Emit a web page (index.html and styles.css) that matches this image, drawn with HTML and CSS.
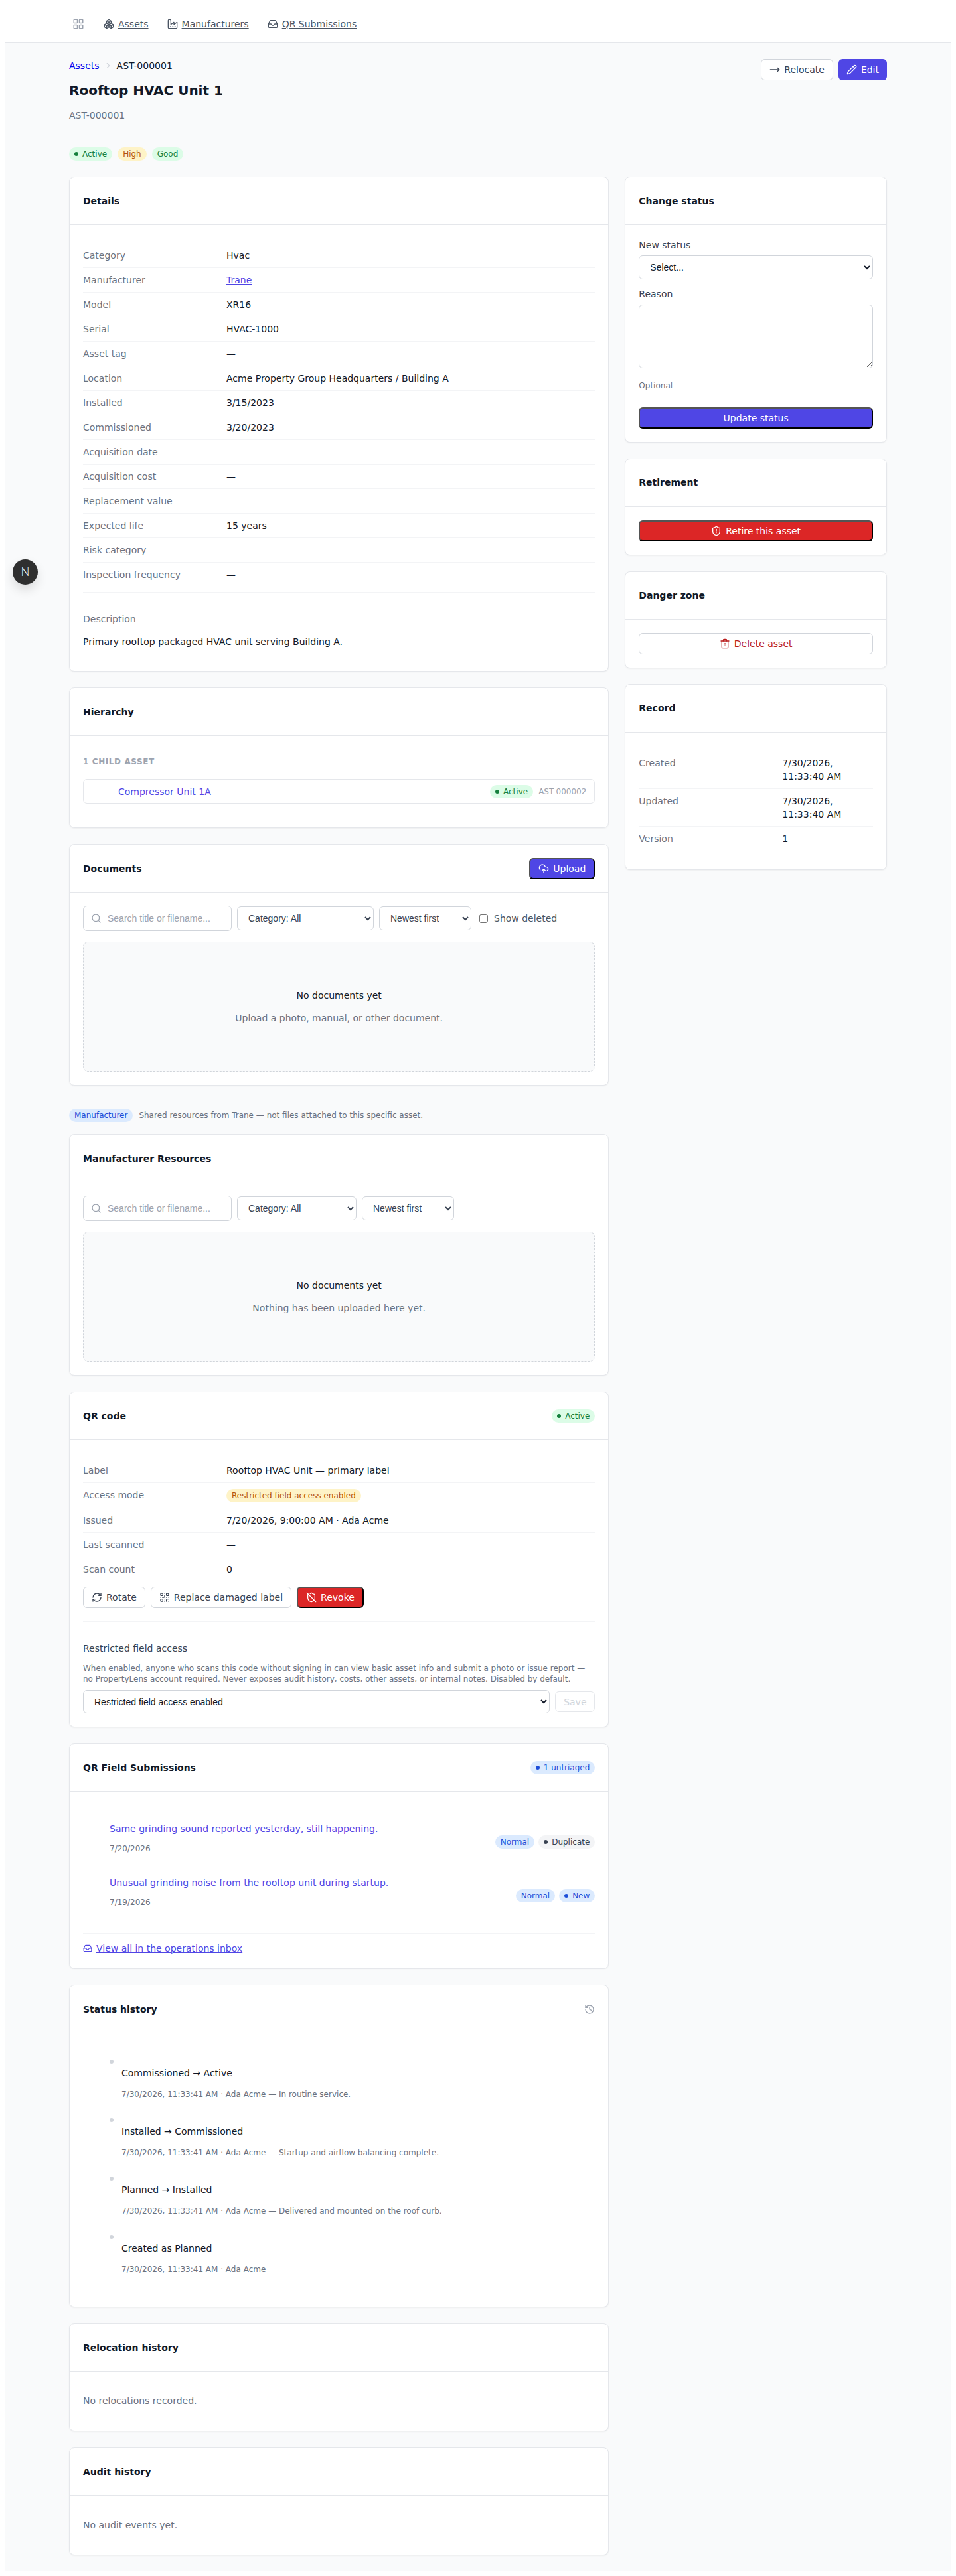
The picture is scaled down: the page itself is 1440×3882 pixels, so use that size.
FILE: index.html
```html
<!DOCTYPE html>
<html lang="en">
<head>
<meta charset="utf-8">
<title>Rooftop HVAC Unit 1</title>
<link rel="stylesheet" href="styles.css">
</head>
<body>
<svg class="sprite" aria-hidden="true">
  <symbol id="i-grid" viewBox="0 0 24 24"><rect width="7" height="7" x="3" y="3" rx="1"/><rect width="7" height="7" x="14" y="3" rx="1"/><rect width="7" height="7" x="14" y="14" rx="1"/><rect width="7" height="7" x="3" y="14" rx="1"/></symbol>
  <symbol id="i-boxes" viewBox="0 0 24 24"><path d="M2.97 12.92A2 2 0 0 0 2 14.63v3.24a2 2 0 0 0 .97 1.71l3 1.8a2 2 0 0 0 2.06 0L12 19v-5.5l-5-3-4.03 2.42Z"/><path d="m7 16.5-4.74-2.85"/><path d="m7 16.5 5-3"/><path d="M7 16.5v5.17"/><path d="M12 13.5V19l3.97 2.38a2 2 0 0 0 2.06 0l3-1.8a2 2 0 0 0 .97-1.71v-3.24a2 2 0 0 0-.97-1.71L17 10.5l-5 3Z"/><path d="m17 16.5-5-3"/><path d="m17 16.5 4.74-2.85"/><path d="M17 16.5v5.17"/><path d="M7.97 4.42A2 2 0 0 0 7 6.13v4.37l5 3 5-3V6.13a2 2 0 0 0-.97-1.71l-3-1.8a2 2 0 0 0-2.06 0l-3 1.8Z"/><path d="M12 8 7.26 5.15"/><path d="m12 8 4.74-2.85"/><path d="M12 13.5V8"/></symbol>
  <symbol id="i-factory" viewBox="0 0 24 24"><path d="M2 20a2 2 0 0 0 2 2h16a2 2 0 0 0 2-2V8l-7 5V8l-7 5V4a2 2 0 0 0-2-2H4a2 2 0 0 0-2 2Z"/><path d="M17 18h1"/><path d="M12 18h1"/><path d="M7 18h1"/></symbol>
  <symbol id="i-inbox" viewBox="0 0 24 24"><polyline points="22 12 16 12 14 15 10 15 8 12 2 12"/><path d="M5.45 5.11 2 12v6a2 2 0 0 0 2 2h16a2 2 0 0 0 2-2v-6l-3.45-6.89A2 2 0 0 0 16.76 4H7.24a2 2 0 0 0-1.79 1.11z"/></symbol>
  <symbol id="i-chevron" viewBox="0 0 24 24"><path d="m9 18 6-6-6-6"/></symbol>
  <symbol id="i-arrow" viewBox="0 0 24 24"><path d="M18 8l4 4-4 4"/><path d="M2 12h20"/></symbol>
  <symbol id="i-pencil" viewBox="0 0 24 24"><path d="M21.174 6.812a1 1 0 0 0-3.986-3.987L3.842 16.174a2 2 0 0 0-.5.83l-1.321 4.352a.5.5 0 0 0 .623.622l4.353-1.32a2 2 0 0 0 .83-.497z"/><path d="m15 5 4 4"/></symbol>
  <symbol id="i-shield-alert" viewBox="0 0 24 24"><path d="M20 13c0 5-3.5 7.5-7.66 8.95a1 1 0 0 1-.67-.01C7.5 20.5 4 18 4 13V6a1 1 0 0 1 1-1c2 0 4.5-1.2 6.24-2.72a1.17 1.17 0 0 1 1.52 0C14.51 3.81 17 5 19 5a1 1 0 0 1 1 1z"/><path d="M12 8v4"/><path d="M12 16h.01"/></symbol>
  <symbol id="i-trash" viewBox="0 0 24 24"><path d="M3 6h18"/><path d="M19 6v14c0 1-1 2-2 2H7c-1 0-2-1-2-2V6"/><path d="M8 6V4c0-1 1-2 2-2h4c1 0 2 1 2 2v2"/><line x1="10" x2="10" y1="11" y2="17"/><line x1="14" x2="14" y1="11" y2="17"/></symbol>
  <symbol id="i-upload" viewBox="0 0 24 24"><path d="M12 13v8"/><path d="M4 14.899A7 7 0 1 1 15.71 8h1.79a4.5 4.5 0 0 1 2.5 8.242"/><path d="m8 17 4-4 4 4"/></symbol>
  <symbol id="i-search" viewBox="0 0 24 24"><circle cx="11" cy="11" r="8"/><path d="m21 21-4.3-4.3"/></symbol>
  <symbol id="i-refresh" viewBox="0 0 24 24"><path d="M3 12a9 9 0 0 1 9-9 9.75 9.75 0 0 1 6.74 2.74L21 8"/><path d="M21 3v5h-5"/><path d="M21 12a9 9 0 0 1-9 9 9.75 9.75 0 0 1-6.74-2.74L3 16"/><path d="M8 16H3v5"/></symbol>
  <symbol id="i-qr" viewBox="0 0 24 24"><rect width="5" height="5" x="3" y="3" rx="1"/><rect width="5" height="5" x="16" y="3" rx="1"/><rect width="5" height="5" x="3" y="16" rx="1"/><path d="M21 16h-3a2 2 0 0 0-2 2v3"/><path d="M21 21v.01"/><path d="M12 7v3a2 2 0 0 1-2 2H7"/><path d="M3 12h.01"/><path d="M12 3h.01"/><path d="M12 16v.01"/><path d="M16 12h1"/><path d="M21 12v.01"/><path d="M12 21v-1"/></symbol>
  <symbol id="i-shield-off" viewBox="0 0 24 24"><path d="m2 2 20 20"/><path d="M5 5a1 1 0 0 0-1 1v7c0 5 3.5 7.5 7.67 8.94a1 1 0 0 0 .67.01c2.35-.82 4.48-1.97 5.9-3.71"/><path d="M9.309 3.652A12.252 12.252 0 0 0 11.24 2.28a1.17 1.17 0 0 1 1.52 0C14.51 3.81 17 5 19 5a1 1 0 0 1 1 1v7a9.784 9.784 0 0 1-.08 1.264"/></symbol>
  <symbol id="i-history" viewBox="0 0 24 24"><path d="M3 12a9 9 0 1 0 9-9 9.75 9.75 0 0 0-6.74 2.74L3 8"/><path d="M3 3v5h5"/><path d="M12 7v5l4 2"/></symbol>
</svg>

<div class="app">
  <header class="topbar">
    <nav class="topbar-inner">
      <svg class="icon nav-toggle"><use href="#i-grid"/></svg>
      <a class="nav-link" href="#"><svg class="icon"><use href="#i-boxes"/></svg>Assets</a>
      <a class="nav-link" href="#"><svg class="icon"><use href="#i-factory"/></svg>Manufacturers</a>
      <a class="nav-link" href="#"><svg class="icon"><use href="#i-inbox"/></svg>QR Submissions</a>
    </nav>
  </header>

  <main class="page">
    <div class="page-head">
      <div>
        <div class="crumbs"><a class="crumb-link" href="#">Assets</a><svg class="icon crumb-sep"><use href="#i-chevron"/></svg><span>AST-000001</span></div>
        <h1 class="title">Rooftop HVAC Unit 1</h1>
        <div class="subtitle">AST-000001</div>
      </div>
      <div class="head-actions">
        <a class="btn btn-outline btn-link" href="#"><svg class="icon"><use href="#i-arrow"/></svg>Relocate</a>
        <a class="btn btn-indigo btn-link" href="#"><svg class="icon"><use href="#i-pencil"/></svg>Edit</a>
      </div>
    </div>

    <div class="badge-row">
      <span class="badge green"><i class="dot"></i>Active</span>
      <span class="badge amber">High</span>
      <span class="badge green">Good</span>
    </div>

    <div class="layout">
      <div class="col col-main">
        <section class="card">
          <div class="card-head"><h2 class="card-title">Details</h2></div>
          <div class="card-body">
            <dl class="rows">
              <div class="row"><dt>Category</dt><dd>Hvac</dd></div>
              <div class="row"><dt>Manufacturer</dt><dd><a class="link" href="#">Trane</a></dd></div>
              <div class="row"><dt>Model</dt><dd>XR16</dd></div>
              <div class="row"><dt>Serial</dt><dd>HVAC-1000</dd></div>
              <div class="row"><dt>Asset tag</dt><dd>—</dd></div>
              <div class="row"><dt>Location</dt><dd>Acme Property Group Headquarters / Building A</dd></div>
              <div class="row"><dt>Installed</dt><dd>3/15/2023</dd></div>
              <div class="row"><dt>Commissioned</dt><dd>3/20/2023</dd></div>
              <div class="row"><dt>Acquisition date</dt><dd>—</dd></div>
              <div class="row"><dt>Acquisition cost</dt><dd>—</dd></div>
              <div class="row"><dt>Replacement value</dt><dd>—</dd></div>
              <div class="row"><dt>Expected life</dt><dd>15 years</dd></div>
              <div class="row"><dt>Risk category</dt><dd>—</dd></div>
              <div class="row"><dt>Inspection frequency</dt><dd>—</dd></div>
            </dl>
            <div class="description">
              <p class="description-label">Description</p>
              <p class="description-text">Primary rooftop packaged HVAC unit serving Building A.</p>
            </div>
          </div>
        </section>

        <section class="card">
          <div class="card-head"><h2 class="card-title">Hierarchy</h2></div>
          <div class="card-body">
            <div class="eyebrow">1 child asset</div>
            <div class="child">
              <a class="link child-link" href="#">Compressor Unit 1A</a>
              <span class="badge green"><i class="dot"></i>Active</span>
              <span class="child-code">AST-000002</span>
            </div>
          </div>
        </section>

        <section class="card">
          <div class="card-head">
            <h2 class="card-title">Documents</h2>
            <button class="btn btn-solid indigo" type="button"><svg class="icon"><use href="#i-upload"/></svg>Upload</button>
          </div>
          <div class="card-body">
            <div class="toolbar">
              <div class="search"><svg class="icon search-icon"><use href="#i-search"/></svg><input class="search-input" type="text" placeholder="Search title or filename..."></div>
              <select class="select select-cat-wide"><option>Category: All</option></select>
              <select class="select select-sort"><option>Newest first</option></select>
              <label class="check"><input type="checkbox">Show deleted</label>
            </div>
            <div class="empty">
              <div class="empty-title">No documents yet</div>
              <div class="empty-sub">Upload a photo, manual, or other document.</div>
            </div>
          </div>
        </section>

        <div class="mfr-group">
          <div class="mfr-note"><span class="badge blue">Manufacturer</span><span>Shared resources from Trane — not files attached to this specific asset.</span></div>
          <section class="card">
            <div class="card-head"><h2 class="card-title">Manufacturer Resources</h2></div>
            <div class="card-body">
              <div class="toolbar">
                <div class="search"><svg class="icon search-icon"><use href="#i-search"/></svg><input class="search-input" type="text" placeholder="Search title or filename..."></div>
                <select class="select select-cat"><option>Category: All</option></select>
                <select class="select select-sort"><option>Newest first</option></select>
              </div>
              <div class="empty">
                <div class="empty-title">No documents yet</div>
                <div class="empty-sub">Nothing has been uploaded here yet.</div>
              </div>
            </div>
          </section>
        </div>

        <section class="card">
          <div class="card-head">
            <h2 class="card-title">QR code</h2>
            <span class="badge green"><i class="dot"></i>Active</span>
          </div>
          <div class="card-body">
            <dl class="rows">
              <div class="row"><dt>Label</dt><dd>Rooftop HVAC Unit — primary label</dd></div>
              <div class="row row-badge"><dt>Access mode</dt><dd><span class="badge amber">Restricted field access enabled</span></dd></div>
              <div class="row"><dt>Issued</dt><dd>7/20/2026, 9:00:00 AM · Ada Acme</dd></div>
              <div class="row"><dt>Last scanned</dt><dd>—</dd></div>
              <div class="row"><dt>Scan count</dt><dd>0</dd></div>
            </dl>
            <div class="qr-actions">
              <button class="btn btn-outline" type="button"><svg class="icon"><use href="#i-refresh"/></svg>Rotate</button>
              <button class="btn btn-outline" type="button"><svg class="icon"><use href="#i-qr"/></svg>Replace damaged label</button>
              <button class="btn btn-solid red" type="button"><svg class="icon"><use href="#i-shield-off"/></svg>Revoke</button>
            </div>
            <div class="access">
              <div class="access-title">Restricted field access</div>
              <p class="access-help">When enabled, anyone who scans this code without signing in can view basic asset info and submit a photo or issue report — no PropertyLens account required. Never exposes audit history, costs, other assets, or internal notes. Disabled by default.</p>
              <div class="access-form">
                <select class="select select-access"><option>Restricted field access enabled</option></select>
                <button class="btn btn-save" type="button" disabled>Save</button>
              </div>
            </div>
          </div>
        </section>

        <section class="card">
          <div class="card-head">
            <h2 class="card-title">QR Field Submissions</h2>
            <span class="badge blue"><i class="dot"></i>1 untriaged</span>
          </div>
          <div class="card-body">
            <ul class="subs">
              <li class="sub">
                <div class="sub-main"><a class="link" href="#">Same grinding sound reported yesterday, still happening.</a><div class="sub-date">7/20/2026</div></div>
                <div class="sub-badges"><span class="badge blue">Normal</span><span class="badge gray"><i class="dot"></i>Duplicate</span></div>
              </li>
              <li class="sub">
                <div class="sub-main"><a class="link" href="#">Unusual grinding noise from the rooftop unit during startup.</a><div class="sub-date">7/19/2026</div></div>
                <div class="sub-badges"><span class="badge blue">Normal</span><span class="badge blue"><i class="dot"></i>New</span></div>
              </li>
            </ul>
            <div class="inbox-foot"><svg class="icon link-icon"><use href="#i-inbox"/></svg><a class="link" href="#">View all in the operations inbox</a></div>
          </div>
        </section>

        <section class="card">
          <div class="card-head">
            <h2 class="card-title">Status history</h2>
            <svg class="icon head-icon"><use href="#i-history"/></svg>
          </div>
          <div class="card-body">
            <ol class="timeline">
              <li class="event"><i class="event-dot"></i><p class="event-title">Commissioned → Active</p><p class="event-meta">7/30/2026, 11:33:41 AM · Ada Acme — In routine service.</p></li>
              <li class="event"><i class="event-dot"></i><p class="event-title">Installed → Commissioned</p><p class="event-meta">7/30/2026, 11:33:41 AM · Ada Acme — Startup and airflow balancing complete.</p></li>
              <li class="event"><i class="event-dot"></i><p class="event-title">Planned → Installed</p><p class="event-meta">7/30/2026, 11:33:41 AM · Ada Acme — Delivered and mounted on the roof curb.</p></li>
              <li class="event"><i class="event-dot"></i><p class="event-title">Created as Planned</p><p class="event-meta">7/30/2026, 11:33:41 AM · Ada Acme</p></li>
            </ol>
          </div>
        </section>

        <section class="card">
          <div class="card-head"><h2 class="card-title">Relocation history</h2></div>
          <div class="card-body"><p class="muted-line">No relocations recorded.</p></div>
        </section>

        <section class="card">
          <div class="card-head"><h2 class="card-title">Audit history</h2></div>
          <div class="card-body"><p class="muted-line">No audit events yet.</p></div>
        </section>
      </div>

      <aside class="col">
        <section class="card">
          <div class="card-head"><h2 class="card-title">Change status</h2></div>
          <div class="card-body">
            <label class="field-label">New status</label>
            <select class="select select-full"><option>Select...</option></select>
            <label class="field-label field-label-next">Reason</label>
            <textarea class="textarea"></textarea>
            <p class="hint">Optional</p>
            <button class="btn btn-solid indigo btn-full" type="button">Update status</button>
          </div>
        </section>

        <section class="card">
          <div class="card-head"><h2 class="card-title">Retirement</h2></div>
          <div class="card-body">
            <button class="btn btn-solid red btn-full" type="button"><svg class="icon"><use href="#i-shield-alert"/></svg>Retire this asset</button>
          </div>
        </section>

        <section class="card">
          <div class="card-head"><h2 class="card-title">Danger zone</h2></div>
          <div class="card-body">
            <button class="btn btn-outline btn-danger btn-full" type="button"><svg class="icon"><use href="#i-trash"/></svg>Delete asset</button>
          </div>
        </section>

        <section class="card">
          <div class="card-head"><h2 class="card-title">Record</h2></div>
          <div class="card-body">
            <dl class="rows">
              <div class="row"><dt>Created</dt><dd>7/30/2026, 11:33:40 AM</dd></div>
              <div class="row"><dt>Updated</dt><dd>7/30/2026, 11:33:40 AM</dd></div>
              <div class="row"><dt>Version</dt><dd>1</dd></div>
            </dl>
          </div>
        </section>
      </aside>
    </div>
  </main>
</div>

<div class="dev-indicator">N</div>
</body>
</html>
```
FILE: styles.css
```css
* { box-sizing: border-box; }

body {
  background: #fff;
  color: #111827;
  font-family: "DejaVu Sans", sans-serif;
  font-size: 14px;
  line-height: 20px;
}

.sprite { display: none; }

.icon {
  width: 16px;
  height: 16px;
  flex: none;
  fill: none;
  stroke: currentColor;
  stroke-width: 2;
  stroke-linecap: round;
  stroke-linejoin: round;
}

.app { background: #f9fafb; min-height: 3866px; }

.topbar { background: #fff; border-bottom: 1px solid #e5e7eb; height: 57px; }
.topbar-inner {
  max-width: 1280px;
  margin: 0 auto;
  padding: 0 24px;
  height: 56px;
  display: flex;
  align-items: center;
}
.nav-toggle { width: 18px; height: 18px; margin: 0 17px 0 5px; color: #9ca3af; }
.nav-link {
  display: flex;
  align-items: center;
  gap: 6px;
  padding: 0 12px;
  margin-right: 4px;
  color: #4b5563;
}

.page { max-width: 1280px; margin: 0 auto; padding: 24px 24px 24px; }

.page-head { display: flex; justify-content: space-between; align-items: flex-start; }
.crumbs { display: flex; align-items: center; gap: 4px; color: #111827; }
.crumb-link { color: #0000ee; }
.crumb-sep { width: 14px; height: 14px; margin: 0 2px; color: #d1d5db; }
.title { margin: 13px 0 0; font-size: 20px; line-height: 28px; font-weight: 700; }
.subtitle { margin-top: 14px; color: #6b7280; }
.head-actions { display: flex; gap: 8px; }

.badge-row { display: flex; gap: 8px; margin-top: 38px; margin-bottom: 24px; }

.badge {
  display: inline-flex;
  align-items: center;
  gap: 6px;
  height: 20px;
  padding: 0 8px;
  border-radius: 999px;
  font-size: 12px;
  line-height: 16px;
  white-space: nowrap;
}
.dot { width: 6px; height: 6px; border-radius: 50%; background: currentColor; flex: none; }
.green { background: #dcfce7; color: #15803d; }
.amber { background: #fef3c7; color: #b45309; }
.blue { background: #dbeafe; color: #1d4ed8; }
.gray { background: #f3f4f6; color: #374151; }

.btn {
  display: inline-flex;
  align-items: center;
  justify-content: center;
  gap: 6px;
  height: 32px;
  padding: 0 12px;
  border-radius: 6px;
  font-family: "DejaVu Sans", sans-serif;
  font-size: 14px;
  line-height: 20px;
  white-space: nowrap;
}
.btn-link { text-decoration: underline; }
.btn-outline { background: #fff; border: 1px solid #d1d5db; color: #374151; }
.btn-indigo { background: #4f46e5; border: 0; color: #fff; }
.btn-solid { border: 2px outset #000; color: #fff; }
.btn-solid.indigo { background: #4f46e5; }
.btn-solid.red { background: #dc2626; }
.btn-danger { color: #b91c1c; }
.btn-full { width: 100%; }
.btn-save {
  width: 60px;
  height: 31px;
  background: #fff;
  border: 1px solid #e5e7eb;
  color: #d1d5db;
}

.layout { display: grid; grid-template-columns: repeat(3, minmax(0, 1fr)); gap: 24px; align-items: start; }
.col { display: flex; flex-direction: column; gap: 24px; min-width: 0; }
.col-main { grid-column: span 2; }

.card {
  background: #fff;
  border: 1px solid #e5e7eb;
  border-radius: 8px;
  box-shadow: 0 1px 2px rgba(0, 0, 0, 0.05);
}
.card-head {
  display: flex;
  align-items: center;
  justify-content: space-between;
  height: 72px;
  padding: 0 20px;
  border-bottom: 1px solid #e5e7eb;
}
.card-title { margin: 0; font-size: 14px; line-height: 20px; font-weight: 700; }
.card-body { padding: 20px; }
.head-icon { color: #9ca3af; }

.rows { margin: 8px 0; }
.row {
  display: grid;
  grid-template-columns: 200px minmax(0, 1fr);
  column-gap: 16px;
  padding: 8px 0;
  border-bottom: 1px solid #f3f4f6;
}
.row:last-child { border-bottom: 0; }
.row dt { color: #6b7280; }
.row dd { margin: 0; color: #111827; }
.row-badge dd .badge { display: flex; width: fit-content; margin-top: 1px; }

.link { color: #4f46e5; }

.description { margin-top: 0; padding-top: 30px; border-top: 1px solid #f3f4f6; }
.description-label { margin: 0 0 14px; color: #6b7280; }
.description-text { margin: 0 0 14px; }

.eyebrow {
  margin: 11px 0 18px;
  color: #9ca3af;
  font-size: 12px;
  line-height: 16px;
  font-weight: 700;
  letter-spacing: 0.6px;
  text-transform: uppercase;
}
.child {
  display: flex;
  align-items: center;
  gap: 8px;
  height: 37px;
  padding: 0 12px 0 52px;
  border: 1px solid #e5e7eb;
  border-radius: 6px;
  margin-bottom: 16px;
}
.child-link { margin-right: auto; }
.child-code { color: #9ca3af; font-size: 12px; }

.toolbar { display: flex; align-items: center; gap: 8px; margin-bottom: 16px; }
.search { position: relative; width: 224px; flex: none; }
.search-icon { position: absolute; left: 12px; top: 11px; color: #9ca3af; }
.search-input {
  display: block;
  width: 100%;
  height: 38px;
  padding: 0 12px 0 36px;
  background: #fff;
  border: 1px solid #d1d5db;
  border-radius: 6px;
  color: #111827;
  font-family: "Liberation Sans", Arial, sans-serif;
  font-size: 14px;
}
.search-input::placeholder { color: #9ca3af; opacity: 1; }

.select {
  height: 36px;
  padding: 0 12px;
  background: #fff;
  border: 1px solid #d1d5db;
  border-radius: 6px;
  color: #374151;
  font-family: "Liberation Sans", Arial, sans-serif;
  font-size: 14px;
}
.select-cat-wide { width: 206px; }
.select-cat { width: 180px; }
.select-sort { width: 139px; }
.select-full { display: block; width: 100%; margin-top: 6px; color: #111827; }
.select-access { flex: 1; min-width: 0; height: 35px; color: #111827; }

.check { display: flex; align-items: center; gap: 6px; margin-left: 0; color: #4b5563; }

.empty {
  display: flex;
  flex-direction: column;
  align-items: center;
  justify-content: center;
  gap: 14px;
  min-height: 196px;
  background: #f9fafb;
  border: 1px dashed #d1d5db;
  border-radius: 8px;
}
.empty-sub { color: #6b7280; }

.mfr-group { padding-top: 10.5px; }
.mfr-note { display: flex; align-items: center; gap: 9px; margin-bottom: 18.5px; color: #6b7280; font-size: 12px; }

.qr-actions { display: flex; gap: 8px; padding-bottom: 20px; border-bottom: 1px solid #f3f4f6; }
.access { padding-top: 30px; }
.access-title { color: #374151; }
.access-help { margin: 12px 0 9px; color: #6b7280; font-size: 12px; line-height: 16px; }
.access-form { display: flex; align-items: center; gap: 8px; }

.subs { margin: 16px 0; padding: 0 0 0 40px; list-style: none; }
.sub {
  display: flex;
  align-items: center;
  justify-content: space-between;
  border-bottom: 1px solid #f3f4f6;
}
.sub:last-child { border-bottom: 0; }
.sub-main { padding: 10px 0 22px; }
.sub-date { margin-top: 12px; color: #6b7280; font-size: 12px; line-height: 16px; }
.sub-badges { display: flex; gap: 6px; }
.inbox-foot { display: flex; align-items: center; gap: 6px; padding-top: 12px; border-top: 1px solid #f3f4f6; color: #4f46e5; }
.link-icon { width: 14px; height: 14px; }

.timeline { margin: 16px 0; padding: 0 0 0 40px; list-style: none; }
.event { position: relative; padding: 14px 0 12px 18px; margin-bottom: 12px; }
.event:last-child { margin-bottom: 0; }
.event-dot { position: absolute; left: 0; top: 4px; width: 6px; height: 6px; border-radius: 50%; background: #d1d5db; }
.event-title { margin: 0 0 14px; }
.event-meta { margin: 0; color: #6b7280; font-size: 12px; line-height: 16px; }

.muted-line { margin: 14px 0 15px; color: #6b7280; }

.field-label { display: block; color: #374151; }
.field-label-next { margin-top: 12px; }
.textarea {
  display: block;
  width: 100%;
  height: 95.5px;
  margin-top: 6px;
  background: #fff;
  border: 1px solid #d1d5db;
  border-radius: 6px;
}
.hint { margin: 18px 0 25px; color: #6b7280; font-size: 12px; line-height: 16px; }

.dev-indicator {
  position: absolute;
  left: 19px;
  top: 843px;
  width: 38px;
  height: 38px;
  display: flex;
  align-items: center;
  justify-content: center;
  border-radius: 50%;
  background: #2f2f2f;
  color: #fff;
  font-family: "Lato", sans-serif;
  font-weight: 300;
  font-size: 17px;
  box-shadow: 0 8px 16px rgba(0, 0, 0, 0.12);
}
```
